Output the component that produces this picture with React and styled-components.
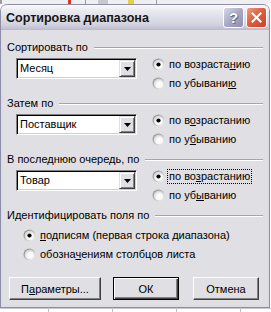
import React, { useId } from "react";
import styled, { createGlobalStyle, css } from "styled-components";

const GlobalStyle = createGlobalStyle`
  html, body { margin: 0; padding: 0; background: #ffffff; }
  body { font-family: "Liberation Sans", Arial, sans-serif; font-size: 11px; color: #000; }
  * { box-sizing: border-box; }
`;

const Screen = styled.div`
  width: 271px;
  height: 312px;
  display: flex;
  flex-direction: column;
  overflow: hidden;
  background: #ffffff;
`;

const ToolbarStrip = styled.div`
  height: 4px;
  flex: none;
  display: flex;
  align-items: stretch;
  background: #efeff2;
`;

const StripMark = styled.span`
  flex: none;
  width: ${(p) => p.$w}px;
  margin-left: ${(p) => p.$ml}px;
  background: ${(p) => p.$c};
`;

const Window = styled.div`
  flex: none;
  width: 270px;
  height: 304px;
  display: flex;
  flex-direction: column;
  border: 1px solid #8e8ea6;
  border-top: none;
  border-radius: 7px 7px 0 0;
  background: #dcdce4;
  padding: 0 2px 2px 2px;
  overflow: hidden;
`;

const TitleBar = styled.div`
  flex: none;
  height: 26px;
  margin: 0 -3px;
  padding: 0 3px 0 6px;
  display: flex;
  align-items: center;
  border-top: 1px solid #8e8ea6;
  border-radius: 7px 7px 0 0;
  background: linear-gradient(
    #fbfbfd 0%,
    #ececf2 18%,
    #dedee8 50%,
    #d2d2de 80%,
    #b9b9ca 100%
  );
`;

const TitleText = styled.span`
  font-family: "Liberation Sans", Arial, sans-serif;
  font-weight: bold;
  font-size: 12.5px;
  color: #151515;
  padding-top: 1px;
`;

const CaptionButtons = styled.div`
  margin-left: auto;
  display: flex;
  gap: 2px;
`;

const CaptionButton = styled.div`
  width: 21px;
  height: 21px;
  border: 1px solid #ffffff;
  border-radius: 3px;
  display: flex;
  align-items: center;
  justify-content: center;
  ${(p) =>
    p.$variant === "close"
      ? css`
          background: linear-gradient(135deg, #f09a82 0%, #e0603f 45%, #c8412a 100%);
        `
      : css`
          background: linear-gradient(135deg, #d8d8e8 0%, #a9a9c4 50%, #8d8daf 100%);
        `}
`;

const HelpGlyph = styled.span`
  font-family: "Liberation Sans", Arial, sans-serif;
  font-weight: bold;
  font-size: 15px;
  line-height: 1;
  color: #ffffff;
  text-shadow: 0 0 1px #5a5a78, 1px 1px 0 #6a6a88;
`;

const Body = styled.div`
  flex: 1;
  background: #e0dfe3;
  padding: 11px 4px 0 4px;
  display: flex;
  flex-direction: column;
`;

const Group = styled.section`
  display: flex;
  flex-direction: column;
  margin-bottom: 4px;
`;

const GroupHeader = styled.div`
  height: 13px;
  display: flex;
  align-items: center;
  gap: 6px;
`;

const GroupLabel = styled.span`
  white-space: nowrap;
  line-height: 13px;
`;

const EtchedLine = styled.span`
  flex: 1;
  height: 2px;
  margin-top: 1px;
  border-top: 1px solid #a6a6ae;
  border-bottom: 1px solid #ffffff;
`;

const SortRow = styled.div`
  margin-top: 1px;
  display: flex;
  align-items: flex-start;
`;

const Combo = styled.div`
  margin: 3px 0 0 9px;
  width: 121px;
  height: 21px;
  display: flex;
  align-items: stretch;
  background: #ffffff;
  border-top: 1px solid #808080;
  border-left: 1px solid #808080;
  border-right: 1px solid #ffffff;
  border-bottom: 1px solid #ffffff;
  box-shadow: inset 1px 1px 0 #000000, inset -1px -1px 0 #d4d0c8;
  padding: 1px;
`;

const ComboText = styled.span`
  flex: 1;
  padding-left: 2px;
  display: flex;
  align-items: center;
  line-height: 1;
`;

const ComboArrow = styled.span`
  flex: none;
  width: 16px;
  display: flex;
  align-items: center;
  justify-content: center;
  background: #e0dfe3;
  border-top: 1px solid #e0dfe3;
  border-left: 1px solid #e0dfe3;
  border-right: 1px solid #404040;
  border-bottom: 1px solid #404040;
  box-shadow: inset 1px 1px 0 #ffffff, inset -1px -1px 0 #808080;
`;

const RadioColumn = styled.div`
  display: flex;
  flex-direction: column;
  margin-left: ${(p) => p.$ml}px;
  margin-top: ${(p) => p.$mt || 0}px;
`;

const RadioRow = styled.label`
  height: 19px;
  display: flex;
  align-items: center;
  gap: 3px;
`;

const RadioText = styled.span`
  line-height: 13px;
  padding: 0 1px;
  white-space: nowrap;
  outline: ${(p) => (p.$focused ? "1px dotted #000" : "none")};
  outline-offset: 0;
`;

const U = styled.u`
  text-decoration: underline;
  text-underline-offset: 1px;
`;

const ButtonRow = styled.div`
  margin-top: 9px;
  padding-left: 2px;
  display: flex;
  align-items: center;
`;

const PushButton = styled.button`
  width: ${(p) => p.$w}px;
  height: 23px;
  margin-left: ${(p) => p.$ml || 0}px;
  font-family: "Liberation Sans", Arial, sans-serif;
  font-size: 11px;
  color: #000;
  background: #e0dfe3;
  padding: 0;
  border-top: 1px solid #ffffff;
  border-left: 1px solid #ffffff;
  border-right: 1px solid #404040;
  border-bottom: 1px solid #404040;
  box-shadow: inset -1px -1px 0 #808080;
  ${(p) =>
    p.$default &&
    css`
      border: 1px solid #000000;
      box-shadow: inset 1px 1px 0 #ffffff, inset -1px -1px 0 #404040,
        inset -2px -2px 0 #808080;
    `}
`;

const SheetStrip = styled.div`
  flex: 1;
  display: flex;
  background: #ffffff;
  border-top: 1px solid #c8c8d0;
`;

const SheetCell = styled.span`
  flex: none;
  width: ${(p) => p.$w}px;
  border-right: 1px solid #c0c0c0;
`;

function Radio({ checked }) {
  const id = useId().replace(/:/g, "");
  return (
    <svg width="13" height="13" viewBox="0 0 13 13" style={{ flex: "none" }}>
      <defs>
        <linearGradient id={`s${id}`} x1="0" y1="0" x2="1" y2="1">
          <stop offset="0" stopColor="#7c7c7c" />
          <stop offset="0.55" stopColor="#c4c4c4" />
          <stop offset="1" stopColor="#ffffff" />
        </linearGradient>
        <radialGradient id={`f${id}`} cx="0.6" cy="0.65" r="0.6">
          <stop offset="0" stopColor="#ffffff" />
          <stop offset="0.6" stopColor="#f6f6f6" />
          <stop offset="1" stopColor="#d6d6da" />
        </radialGradient>
      </defs>
      <circle cx="6.5" cy="6.5" r="6" fill={`url(#s${id})`} />
      <circle cx="6.5" cy="6.5" r="4.8" fill={`url(#f${id})`} />
      {checked && <circle cx="6.5" cy="6.5" r="2.1" fill="#000" />}
    </svg>
  );
}

function DownTriangle() {
  return (
    <svg width="7" height="4" viewBox="0 0 7 4">
      <path d="M0 0H7L3.5 4Z" fill="#000" />
    </svg>
  );
}

function CloseX() {
  return (
    <svg width="11" height="11" viewBox="0 0 11 11">
      <path d="M1.5 1.5L9.5 9.5M9.5 1.5L1.5 9.5" stroke="#ffffff" strokeWidth="2" strokeLinecap="square" />
    </svg>
  );
}

const groups = [
  {
    label: "Сортировать по",
    value: "Месяц",
    asc: ["по возраста", "н", "ию"],
    desc: ["по убывани", "ю", ""],
  },
  {
    label: "Затем по",
    value: "Поставщик",
    asc: ["по в", "о", "зрастанию"],
    desc: ["по у", "б", "ыванию"],
  },
  {
    label: "В последнюю очередь, по",
    value: "Товар",
    asc: ["по во", "з", "растанию"],
    desc: ["по уб", "ы", "ванию"],
    focused: true,
  },
];

function Mn({ parts }) {
  return (
    <>
      {parts[0]}
      <U>{parts[1]}</U>
      {parts[2]}
    </>
  );
}

export default function App() {
  return (
    <>
      <GlobalStyle />
      <Screen>
        <ToolbarStrip>
          <StripMark $w={2} $ml={0} $c="#9a9aa8" />
          <StripMark $w={3} $ml={66} $c="#d43a2a" />
          <StripMark $w={1} $ml={14} $c="#9a9aa8" />
          <StripMark $w={10} $ml={12} $c="#c8c8d0" />
          <StripMark $w={6} $ml={20} $c="#e8d040" />
          <StripMark $w={1} $ml={22} $c="#9a9aa8" />
        </ToolbarStrip>
        <Window>
          <TitleBar>
            <TitleText>Сортировка диапазона</TitleText>
            <CaptionButtons>
              <CaptionButton $variant="help">
                <HelpGlyph>?</HelpGlyph>
              </CaptionButton>
              <CaptionButton $variant="close">
                <CloseX />
              </CaptionButton>
            </CaptionButtons>
          </TitleBar>
          <Body>
            {groups.map((g) => (
              <Group key={g.label}>
                <GroupHeader>
                  <GroupLabel>{g.label}</GroupLabel>
                  <EtchedLine />
                </GroupHeader>
                <SortRow>
                  <Combo>
                    <ComboText>{g.value}</ComboText>
                    <ComboArrow>
                      <DownTriangle />
                    </ComboArrow>
                  </Combo>
                  <RadioColumn $ml={15}>
                    <RadioRow>
                      <Radio checked />
                      <RadioText $focused={g.focused}>
                        <Mn parts={g.asc} />
                      </RadioText>
                    </RadioRow>
                    <RadioRow>
                      <Radio />
                      <RadioText>
                        <Mn parts={g.desc} />
                      </RadioText>
                    </RadioRow>
                  </RadioColumn>
                </SortRow>
              </Group>
            ))}
            <Group>
              <GroupHeader>
                <GroupLabel>Идентифицировать поля по</GroupLabel>
                <EtchedLine />
              </GroupHeader>
              <RadioColumn $ml={16} $mt={4}>
                <RadioRow>
                  <Radio checked />
                  <RadioText>
                    <Mn parts={["", "п", "одписям (первая строка диапазона)"]} />
                  </RadioText>
                </RadioRow>
                <RadioRow>
                  <Radio />
                  <RadioText>
                    <Mn parts={["обозна", "ч", "ениям столбцов листа"]} />
                  </RadioText>
                </RadioRow>
              </RadioColumn>
            </Group>
            <ButtonRow>
              <PushButton $w={92}>
                <Mn parts={["П", "а", "раметры..."]} />
              </PushButton>
              <PushButton $w={66} $ml={12} $default>
                ОК
              </PushButton>
              <PushButton $w={66} $ml={14}>
                Отмена
              </PushButton>
            </ButtonRow>
          </Body>
        </Window>
        <SheetStrip>
          <SheetCell $w={49} />
          <SheetCell $w={64} />
          <SheetCell $w={64} />
          <SheetCell $w={64} />
        </SheetStrip>
      </Screen>
    </>
  );
}
